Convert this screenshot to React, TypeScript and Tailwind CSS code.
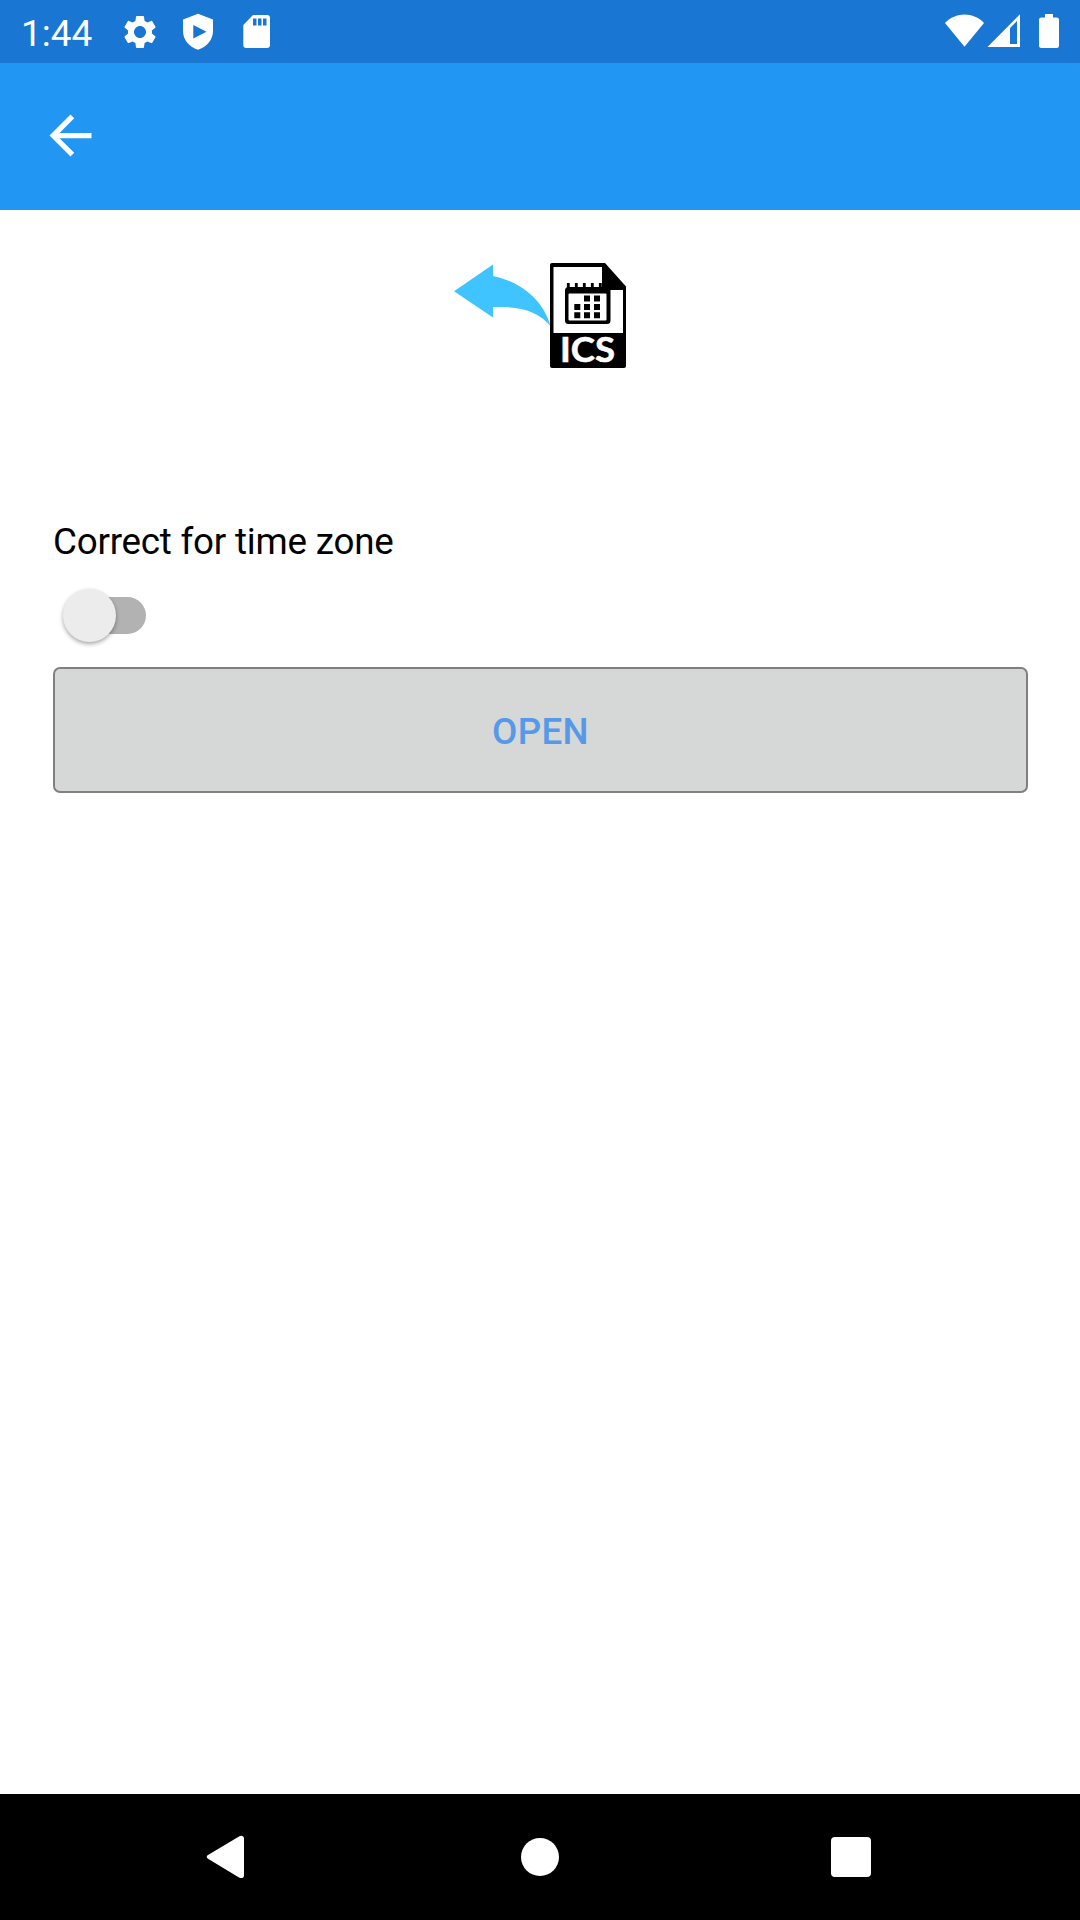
function StatusBar() {
  return (
    <header className="flex h-[63px] shrink-0 items-start bg-[#1976d2] text-white">
      <span className="ml-[21px] mt-[11px] w-[97px] text-[37px] leading-[46px]">1:44</span>
      <svg className="mt-3 h-[40px] w-[40px] shrink-0 ml-[2px]" viewBox="0 0 24 24" fill="currentColor">
        <path d="M19.14 12.94c.04-.3.06-.61.06-.94 0-.32-.02-.64-.07-.94l2.03-1.58c.18-.14.23-.41.12-.61l-1.92-3.32c-.12-.22-.37-.29-.59-.22l-2.39.96c-.5-.38-1.03-.7-1.62-.94l-.36-2.54c-.04-.24-.24-.41-.48-.41h-3.84c-.24 0-.43.17-.47.41l-.36 2.54c-.59.24-1.13.57-1.62.94l-2.39-.96c-.22-.08-.47 0-.59.22L2.74 8.87c-.12.21-.08.47.12.61l2.03 1.58c-.05.3-.09.63-.09.94s.02.64.07.94l-2.03 1.58c-.18.14-.23.41-.12.61l1.92 3.32c.12.22.37.29.59.22l2.39-.96c.5.38 1.03.7 1.62.94l.36 2.54c.05.24.24.41.48.41h3.84c.24 0 .44-.17.47-.41l.36-2.54c.59-.24 1.13-.56 1.62-.94l2.39.96c.22.08.47 0 .59-.22l1.92-3.32c.12-.22.07-.47-.12-.61l-2.01-1.58zM12 15.6c-1.98 0-3.6-1.62-3.6-3.6s1.62-3.6 3.6-3.6 3.6 1.62 3.6 3.6-1.62 3.6-3.6 3.6z" />
      </svg>
      <svg className="ml-[23px] mt-[13px] h-[38px] w-[30px] shrink-0" viewBox="0 0 30 38" fill="currentColor" fillRule="evenodd">
        <path d="M15 .8 30 6.5V18c0 9-6.5 16-15 18.8C6.5 34 0 27 0 18V6.500zM10.300 12v13.500L23.500 18.700z" />
      </svg>
      <svg className="ml-[29.500px] mt-[15px] h-[33px] w-[27px] shrink-0" viewBox="0 0 27 33" fill="currentColor" fillRule="evenodd">
        <path d="M10 0h14a3 3 0 0 1 3 3v27a3 3 0 0 1-3 3H3.300a3 3 0 0 1-3-3V10zM10 3.500v7h3.500v-7zm5 0v7h3.500v-7zm5 0v7h3.500v-7z" />
      </svg>
      <div className="ml-auto mr-[21px] mt-[14px] flex">
        <svg className="h-[34px] w-[39px]" viewBox="0 0 39 34" fill="currentColor">
          <path d="M0 9C10.500-2.500 28.500-2.500 39 9L19.500 32.800z" />
        </svg>
        <svg className="ml-[3px] h-[34px] w-[33px]" viewBox="0 0 33 34" fill="currentColor" fillRule="evenodd">
          <path d="M33 .3V33H.5zM23 14v16h7V7z" />
        </svg>
        <svg className="ml-[19px] h-[34px] w-5" viewBox="0 0 20 34" fill="currentColor">
          <path d="M6 0h8v3.500h3.700A2.300 2.300 0 0 1 20 5.800v26A2.200 2.200 0 0 1 17.800 34H2.200A2.200 2.200 0 0 1 0 31.800v-26a2.300 2.300 0 0 1 2.300-2.300H6z" />
        </svg>
      </div>
    </header>
  );
}

function IcsLogo() {
  return (
    <svg className="mx-auto mt-10 h-[130px] w-[200px] shrink-0" viewBox="0 0 200 130">
      <path fill="#40c4ff" d="M14 41.300 53 14.500V26C78 31 103 48 110.500 76 98 61 80 56 53 57v10.500z" />
      <path fill="#000" d="M112 13h53l21 23.500V116a2 2 0 0 1-2 2h-72a2 2 0 0 1-2-2V15a2 2 0 0 1 2-2z" />
      <path fill="#fff" d="M113.500 17H162v23h21v43h-69.500z" />
      <rect x="125" y="37" width="45.500" height="37" rx="3.500" fill="#000" />
      <rect x="128.500" y="43.500" width="38" height="27" rx="1" fill="#fff" />
      <path d="M128.300 33v5m8-5v5m8-5v5m8-5v5m8-5v5" stroke="#000" strokeWidth="2.800" />
      <path d="M144 45.500h6v6h-6zm10 0h6v6h-6zM134.300 54h6v6h-6zm9.700 0h6v6h-6zm10 0h6v6h-6zM134.300 62.200h6v6h-6zm9.700 0h6v6h-6zm10 0h6v6h-6z" />
      <text x="120" y="112" fill="#fff" stroke="#fff" strokeWidth="0.6" fontFamily="Lato, sans-serif" fontSize="35" fontWeight="700" textLength="55" lengthAdjust="spacingAndGlyphs">
        ICS
      </text>
    </svg>
  );
}

export default function App() {
  return (
    <div className="flex h-[1920px] w-[1080px] flex-col overflow-hidden bg-white font-['Roboto',sans-serif]">
      <StatusBar />
      <div className="flex h-[147px] shrink-0 items-start bg-[#2196f3] text-white">
        <button aria-label="Back" className="ml-[39px] mt-[41px]">
          <svg className="h-[63px] w-[63px]" viewBox="0 0 24 24" fill="currentColor">
            <path d="M20 11H7.830l5.590-5.590L12 4l-8 8 8 8 1.410-1.410L7.830 13H20z" />
          </svg>
        </button>
      </div>
      <main className="flex flex-1 flex-col px-[53px]">
        <IcsLogo />
        <p className="mt-[140px] text-[36.75px] leading-[44px] tracking-[-0.22px] text-black">Correct for time zone</p>
        <button role="switch" aria-checked="false" aria-label="Correct for time zone" className="ml-[10px] mt-[25px] flex h-[53px] w-[83px] items-center">
          <span className="z-10 h-[53px] w-[53px] shrink-0 rounded-full bg-[#ececec] shadow-[0_2px_4px_rgba(0,0,0,0.35)]" />
          <span className="-ml-[23px] h-[37px] w-[53px] shrink-0 rounded-r-full bg-[#b2b2b2]" />
        </button>
        <button className="mt-[25px] h-[126px] w-[975px] rounded-[7px] border-2 border-[#808080] bg-[#d6d7d7] pt-[3px] text-[36.75px] font-medium tracking-[0.3px] text-[#5599e8]">
          OPEN
        </button>
      </main>
      <nav className="flex h-[126px] shrink-0 items-center bg-black text-white">
        <svg className="ml-[206px] h-[44px] w-[38px]" viewBox="0 0 38 44" fill="currentColor">
          <path d="M33 1.400c2-1.200 5-.6 5 2v37c0 2.600-3 3.200-5 2L2 23.800c-1.700-1-1.700-2.700 0-3.700z" />
        </svg>
        <span className="ml-[277px] h-[38px] w-[38px] rounded-full bg-white" />
        <span className="ml-[272px] h-10 w-10 rounded-[4px] bg-white" />
      </nav>
    </div>
  );
}
